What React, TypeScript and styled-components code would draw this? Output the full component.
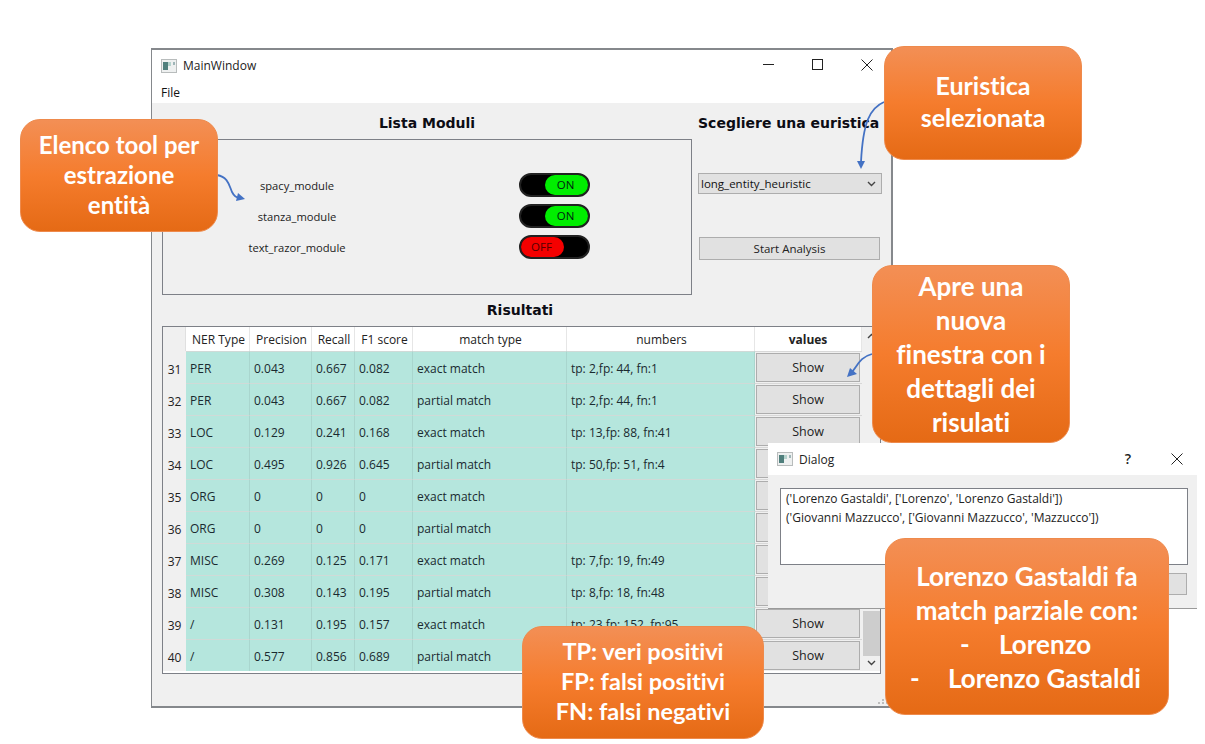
import React from "react";
import styled, { createGlobalStyle } from "styled-components";

const GlobalStyle = createGlobalStyle`
  html, body { margin: 0; padding: 0; background: #fff; }
  body { font-family: "Open Sans", "Liberation Sans", sans-serif; color: #111; }
  * { box-sizing: border-box; }
`;

const Canvas = styled.div`
  position: relative;
  width: 1205px;
  height: 744px;
  overflow: hidden;
  background: #fff;
`;

const Window = styled.div`
  position: absolute;
  left: 151px;
  top: 48px;
  width: 742px;
  height: 660px;
  display: flex;
  flex-direction: column;
  background: #f0f0f0;
  border: 2px solid #85888c;
  border-width: 2px 2px 2px 1px;
`;

const TitleBar = styled.div`
  height: 33px;
  flex: none;
  display: flex;
  align-items: center;
  padding: 0 0 2px 9px;
  background: #fff;
  font-size: 12px;
  color: #222;
`;

const TitleText = styled.span<{ $gap: number }>`
  margin-left: ${(p) => p.$gap}px;
  flex: 1;
`;

const WinButtons = styled.div<{ $gap: number; $right: number; $lift: number }>`
  display: flex;
  align-items: center;
  gap: ${(p) => p.$gap}px;
  margin-right: ${(p) => p.$right}px;
  margin-bottom: ${(p) => p.$lift}px;
`;

const HelpMark = styled.span`
  font-size: 14px;
  font-weight: 600;
  line-height: 14px;
`;

const MenuBar = styled.div`
  height: 20px;
  flex: none;
  padding: 2px 0 0 9px;
  background: #fff;
  font-size: 12px;
  line-height: 16px;
`;

const TopArea = styled.div`
  display: flex;
  flex: none;
  padding: 0 0 0 10px;
`;

const ModuleColumn = styled.div`
  width: 530px;
  flex: none;
`;

const Heading = styled.div`
  height: 36px;
  padding-top: 11px;
  text-align: center;
  font-family: "DejaVu Sans", sans-serif;
  font-size: 14px;
  line-height: 18px;
  font-weight: 700;
  color: #0c0c14;
`;

const ModuleBox = styled.div`
  height: 156px;
  border: 1px solid #7d8087;
  padding-top: 33px;
  display: flex;
  flex-direction: column;
  gap: 7px;
`;

const ModuleRow = styled.div`
  display: grid;
  grid-template-columns: 268px 71px;
  column-gap: 88px;
  height: 24px;
  align-items: center;
`;

const ModuleName = styled.span`
  font-size: 11.2px;
  text-align: center;
  margin-top: 1px;
  color: #222;
`;

const Toggle = styled.div<{ $on: boolean }>`
  width: 71px;
  height: 24px;
  border-radius: 12px;
  background: #000;
  border: 2px solid #222;
  display: flex;
  justify-content: ${(p) => (p.$on ? "flex-end" : "flex-start")};
`;

const ToggleKnob = styled.div<{ $on: boolean }>`
  width: 43px;
  height: 20px;
  border-radius: 10px;
  background: ${(p) => (p.$on ? "#00ee00" : "#f50000")};
  color: ${(p) => (p.$on ? "#002210" : "#500")};
  font-size: 11.5px;
  line-height: 20px;
  padding-right: 2px;
  text-align: center;
`;

const HeuristicColumn = styled.div`
  width: 184px;
  margin-left: 6px;
  flex: none;
`;

const HeuristicTitle = styled(Heading)`
  white-space: nowrap;
  text-align: left;
`;

const Combo = styled.div`
  margin-top: 34px;
  height: 21px;
  width: 184px;
  display: flex;
  align-items: center;
  justify-content: space-between;
  padding: 0 5px 0 2px;
  background: #e1e1e1;
  border: 1px solid #adadad;
  font-size: 11.5px;
`;

const PushButton = styled.div<{ $wide?: boolean }>`
  height: ${(p) => (p.$wide ? 23 : 29)}px;
  display: flex;
  align-items: center;
  justify-content: center;
  background: #e1e1e1;
  border: 1px solid #adadad;
  font-size: ${(p) => (p.$wide ? 11.5 : 12.5)}px;
  color: #222;
`;

const AnalysisButton = styled(PushButton)`
  margin: 43px 0 0 1px;
  width: 181px;
`;

const ResultsTitle = styled(Heading)`
  height: 31px;
  padding-top: 6px;
  width: 720px;
  margin-left: 8px;
  flex: none;
`;

const Table = styled.div`
  margin-left: 10px;
  width: 719px;
  height: 348px;
  flex: none;
  border: 1px solid #7d8087;
  background: #fff;
  display: grid;
  grid-template-columns: 23px 64px 62px 43px 58px 154px 188px 107px 18px;
  grid-template-rows: 24px repeat(10, 32px);
  font-size: 12px;
  overflow: hidden;
`;

const HeadCell = styled.div<{ $bold?: boolean }>`
  display: flex;
  align-items: center;
  justify-content: center;
  padding-left: ${(p) => (p.$bold ? 0 : 2)}px;
  background: #fff;
  border-right: 1px solid #e6e6e6;
  white-space: nowrap;
  font-weight: ${(p) => (p.$bold ? 700 : 400)};
  color: #222;
`;

const Corner = styled.div`
  background: #f0f0f0;
  border-right: 1px solid #e0e0e0;
`;

const RowNumber = styled.div`
  background: #f0f0f0;
  display: flex;
  align-items: center;
  justify-content: center;
  padding-top: 4px;
  color: #222;
`;

const Cell = styled.div`
  background: #b5e6dd;
  border-right: 1px solid #a9d6ce;
  border-top: 1px solid #d0dad7;
  display: flex;
  align-items: center;
  padding: 2px 0 0 4px;
  color: #1a2a30;
  white-space: nowrap;
`;

const ActionCell = styled.div`
  background: #f0f0f0;
  padding: 1px 2px 2px 1px;
  border-top: 1px solid #d8d8d8;
`;

const ScrollTrack = styled.div`
  grid-column: 9;
  grid-row: 1 / span 11;
  background: #f0f0f0;
  display: flex;
  flex-direction: column;
  justify-content: space-between;
  align-items: center;
  padding: 6px 0 5px;
`;

const ScrollThumb = styled.div`
  width: 17px;
  height: 45px;
  margin-top: auto;
  margin-bottom: 4px;
  background: #cdcdcd;
`;

const Grip = styled.svg`
  position: absolute;
  right: 2px;
  bottom: 2px;
`;

const Dialog = styled.div`
  position: absolute;
  left: 768px;
  top: 443px;
  width: 429px;
  height: 166px;
  background: #f0f0f0;
  border-bottom: 1px solid #9a9a9a;
  display: flex;
  flex-direction: column;
  padding: 0 9px 0 0;
`;

const DialogTitle = styled(TitleBar)`
  height: 32px;
  padding: 0 0 0 9px;
  margin-right: -9px;
`;

const DialogText = styled.div`
  margin: 13px 0 0 12px;
  height: 77px;
  border: 1px solid #7d8087;
  background: #fff;
  padding: 0 5px;
  font-size: 12px;
  line-height: 19px;
  white-space: nowrap;
  color: #222;
`;

const DialogAction = styled.div`
  margin: 8px 1px 0 auto;
  width: 220px;
  height: 22px;
  background: #e1e1e1;
  border: 1px solid #adadad;
`;

const Callout = styled.div<{ $x: number; $y: number; $w: number; $h: number; $size: number; $lh: number; $lift?: number }>`
  position: absolute;
  left: ${(p) => p.$x}px;
  top: ${(p) => p.$y}px;
  width: ${(p) => p.$w}px;
  height: ${(p) => p.$h}px;
  padding-bottom: ${(p) => p.$lift ?? 0}px;
  display: flex;
  flex-direction: column;
  align-items: center;
  justify-content: center;
  border-radius: 20px;
  border: 1px solid #ee8a4c;
  background: linear-gradient(180deg, #f38f55 0%, #f57c2d 50%, #e56a15 100%);
  color: #fff;
  font-family: "Lato", "Liberation Sans", sans-serif;
  font-weight: 700;
  font-size: ${(p) => p.$size}px;
  line-height: ${(p) => p.$lh}px;
  font-variant-ligatures: none;
  text-align: center;
  white-space: nowrap;
`;

const BulletLine = styled.div<{ $indent: number }>`
  width: 100%;
  display: flex;
  padding-left: ${(p) => p.$indent}px;
  text-align: left;
`;

const BulletDash = styled.span<{ $gap: number }>`
  width: ${(p) => p.$gap}px;
  flex: none;
`;

const Arrow = styled.svg`
  position: absolute;
  left: 0;
  top: 0;
  pointer-events: none;
`;

const rows = [
  ["31", "PER", "0.043", "0.667", "0.082", "exact match", "tp: 2,fp: 44, fn:1"],
  ["32", "PER", "0.043", "0.667", "0.082", "partial match", "tp: 2,fp: 44, fn:1"],
  ["33", "LOC", "0.129", "0.241", "0.168", "exact match", "tp: 13,fp: 88, fn:41"],
  ["34", "LOC", "0.495", "0.926", "0.645", "partial match", "tp: 50,fp: 51, fn:4"],
  ["35", "ORG", "0", "0", "0", "exact match", ""],
  ["36", "ORG", "0", "0", "0", "partial match", ""],
  ["37", "MISC", "0.269", "0.125", "0.171", "exact match", "tp: 7,fp: 19, fn:49"],
  ["38", "MISC", "0.308", "0.143", "0.195", "partial match", "tp: 8,fp: 18, fn:48"],
  ["39", "/", "0.131", "0.195", "0.157", "exact match", "tp: 23,fp: 152, fn:95"],
  ["40", "/", "0.577", "0.856", "0.689", "partial match", ""],
];

const headers = ["NER Type", "Precision", "Recall", "F1 score", "match type", "numbers"];

const modules = [
  { name: "spacy_module", on: true },
  { name: "stanza_module", on: true },
  { name: "text_razor_module", on: false },
];

const AppIcon = () => (
  <svg width="16" height="14" viewBox="0 0 16 14">
    <rect x="0.5" y="0.5" width="15" height="13" fill="#eef0f0" stroke="#b8bcbc" />
    <rect x="2" y="3" width="5" height="8" fill="#4f7f7c" />
    <rect x="7" y="3" width="3" height="4" fill="#b5d2cc" />
    <rect x="12" y="3" width="2" height="3" fill="#9fb6b8" />
  </svg>
);

const CloseIcon = () => (
  <svg width="12" height="12" viewBox="0 0 12 12">
    <path d="M0.5 0.5L11.5 11.5M11.5 0.5L0.5 11.5" stroke="#222" fill="none" />
  </svg>
);

const Chevron = ({ up }: { up?: boolean }) => (
  <svg width="9" height="6" viewBox="0 0 9 6">
    <path d={up ? "M1 5L4.5 1.5L8 5" : "M1 1L4.5 4.5L8 1"} stroke="#444" strokeWidth="1.4" fill="none" />
  </svg>
);

const App = () => (
  <Canvas>
    <GlobalStyle />
    <Window>
      <TitleBar>
        <AppIcon />
        <TitleText $gap={6}>MainWindow</TitleText>
        <WinButtons $gap={38} $right={18} $lift={2}>
          <svg width="11" height="11" viewBox="0 0 11 11">
            <path d="M0 5.5H11" stroke="#222" />
          </svg>
          <svg width="11" height="11" viewBox="0 0 11 11">
            <rect x="0.5" y="0.5" width="10" height="10" fill="none" stroke="#222" />
          </svg>
          <CloseIcon />
        </WinButtons>
      </TitleBar>
      <MenuBar>File</MenuBar>
      <TopArea>
        <ModuleColumn>
          <Heading>Lista Moduli</Heading>
          <ModuleBox>
            {modules.map((m) => (
              <ModuleRow key={m.name}>
                <ModuleName>{m.name}</ModuleName>
                <Toggle $on={m.on}>
                  <ToggleKnob $on={m.on}>{m.on ? "ON" : "OFF"}</ToggleKnob>
                </Toggle>
              </ModuleRow>
            ))}
          </ModuleBox>
        </ModuleColumn>
        <HeuristicColumn>
          <HeuristicTitle>Scegliere una euristica</HeuristicTitle>
          <Combo>
            long_entity_heuristic
            <Chevron />
          </Combo>
          <AnalysisButton $wide>Start Analysis</AnalysisButton>
        </HeuristicColumn>
      </TopArea>
      <ResultsTitle>Risultati</ResultsTitle>
      <Table>
        <Corner />
        {headers.map((h) => (
          <HeadCell key={h}>{h}</HeadCell>
        ))}
        <HeadCell $bold>values</HeadCell>
        <ScrollTrack>
          <Chevron up />
          <ScrollThumb />
          <Chevron />
        </ScrollTrack>
        {rows.map((r) => (
          <React.Fragment key={r[0]}>
            <RowNumber>{r[0]}</RowNumber>
            {r.slice(1).map((value, i) => (
              <Cell key={i}>{value}</Cell>
            ))}
            <ActionCell>
              <PushButton>Show</PushButton>
            </ActionCell>
          </React.Fragment>
        ))}
      </Table>
      <Grip width="12" height="10" viewBox="0 0 12 10">
        <g fill="#bdbdbd">
          <rect x="9" y="1" width="2" height="2" />
          <rect x="5" y="5" width="2" height="2" />
          <rect x="9" y="5" width="2" height="2" />
          <rect x="1" y="8" width="2" height="2" />
          <rect x="5" y="8" width="2" height="2" />
          <rect x="9" y="8" width="2" height="2" />
        </g>
      </Grip>
    </Window>

    <Dialog>
      <DialogTitle>
        <AppIcon />
        <TitleText $gap={6}>Dialog</TitleText>
        <WinButtons $gap={40} $right={14} $lift={1}>
          <HelpMark>?</HelpMark>
          <CloseIcon />
        </WinButtons>
      </DialogTitle>
      <DialogText>
        ('Lorenzo Gastaldi', ['Lorenzo', 'Lorenzo Gastaldi'])
        <br />
        ('Giovanni Mazzucco', ['Giovanni Mazzucco', 'Mazzucco'])
      </DialogText>
      <DialogAction />
    </Dialog>

    <Arrow width="1205" height="744" viewBox="0 0 1205 744">
      <g fill="none" stroke="#4472c4" strokeWidth="1.8">
        <path d="M217 175C228 177 229 185 232 192C234 196 237 198 240 198" />
        <path d="M884 102C870 108 863 122 861 162" />
        <path d="M872 354C860 357 858 365 852 372" />
      </g>
      <g fill="#4472c4">
        <path d="M245 199L236 201L238 193Z" />
        <path d="M861 169L857 161L865 161Z" />
        <path d="M847 377L850 368L857 374Z" />
      </g>
    </Arrow>

    <Callout $x={20} $y={119} $w={198} $h={113} $size={24} $lh={30} $lift={2}>
      <div>Elenco tool per</div>
      <div>estrazione</div>
      <div>entità</div>
    </Callout>
    <Callout $x={884} $y={46} $w={198} $h={114} $size={25} $lh={32} $lift={4}>
      <div>Euristica</div>
      <div>selezionata</div>
    </Callout>
    <Callout $x={872} $y={265} $w={198} $h={178} $size={26} $lh={34}>
      <div>Apre una</div>
      <div>nuova</div>
      <div>finestra con i</div>
      <div>dettagli dei</div>
      <div>risulati</div>
    </Callout>
    <Callout $x={522} $y={626} $w={242} $h={113} $size={23.5} $lh={30} $lift={4}>
      <div>TP: veri positivi</div>
      <div>FP: falsi positivi</div>
      <div>FN: falsi negativi</div>
    </Callout>
    <Callout $x={885} $y={538} $w={284} $h={177} $size={26} $lh={34}>
      <div>Lorenzo Gastaldi fa</div>
      <div>match parziale con:</div>
      <BulletLine $indent={74}>
        <BulletDash $gap={39}>-</BulletDash>
        <span>Lorenzo</span>
      </BulletLine>
      <BulletLine $indent={24}>
        <BulletDash $gap={38}>-</BulletDash>
        <span>Lorenzo Gastaldi</span>
      </BulletLine>
    </Callout>
  </Canvas>
);

export default App;
